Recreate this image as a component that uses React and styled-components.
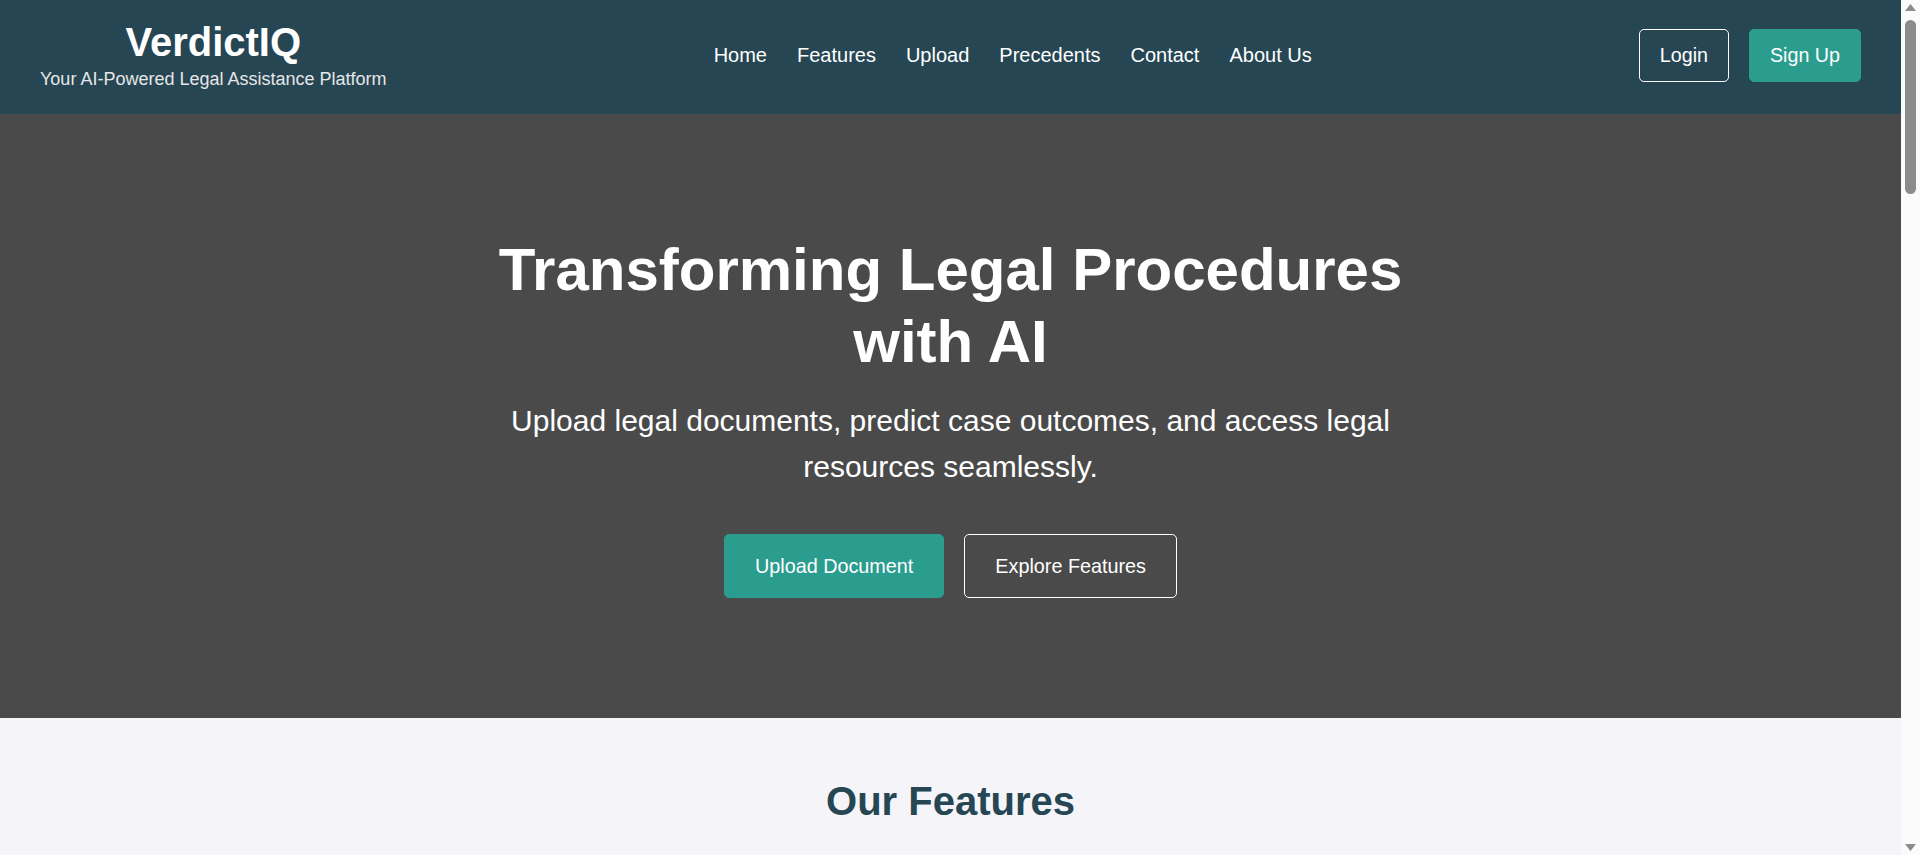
import styled, { createGlobalStyle } from 'styled-components';
import { FileUp, Scale, BookOpen, Gavel, MessageSquare, ShieldCheck, UploadCloud } from 'lucide-react';

const GlobalStyle = createGlobalStyle`
  html, body {
    margin: 0;
    padding: 0;
  }
  body {
    margin-right: 19px;
    font-family: 'Liberation Sans', Arial, sans-serif;
    background: #f4f4f9;
    color: #333;
  }
  * {
    box-sizing: border-box;
  }
`;

const features = [
  { icon: FileUp, title: 'Document Upload', text: 'Upload contracts, petitions and case files in PDF or Word format and let our AI extract the key facts, parties and clauses in seconds.' },
  { icon: Scale, title: 'Outcome Prediction', text: 'Get a data-driven estimate of how your case is likely to be decided, based on thousands of past judgments with similar facts.' },
  { icon: BookOpen, title: 'Precedent Search', text: 'Find relevant precedents instantly. Search by keyword, statute or court and read concise summaries of each decision.' },
  { icon: Gavel, title: 'Legal Procedures', text: 'Step-by-step guidance through filing, hearings and appeals, so you always know what comes next in your matter.' },
  { icon: MessageSquare, title: 'AI Legal Assistant', text: 'Ask questions in plain language and receive clear answers with references to the laws and cases that apply.' },
  { icon: ShieldCheck, title: 'Secure & Private', text: 'Your documents are encrypted end to end and never shared. You stay in full control of your data at all times.' },
];

const precedents = [
  { court: 'Supreme Court', year: '2021', title: 'State v. Harrington', text: 'Clarified the standard of proof required for admitting digital evidence in criminal proceedings.' },
  { court: 'High Court', year: '2019', title: 'Mehta Holdings v. Union Bank', text: 'Established limits on the enforcement of penalty clauses in commercial loan agreements.' },
  { court: 'Court of Appeal', year: '2022', title: 'Rivera v. Coastal Housing', text: 'Confirmed tenant protections against eviction without proper written notice and hearing.' },
];

// the browser scrollbar seen on the right edge of the page
function ScrollRail() {
  return (
    <S.Rail>
      <S.Arrow viewBox="0 0 19 17">
        <polygon points="4,11 15,11 9.5,4" />
      </S.Arrow>
      <S.Thumb />
      <S.Arrow viewBox="0 0 19 17" $bottom>
        <polygon points="4,6 15,6 9.5,13" />
      </S.Arrow>
    </S.Rail>
  );
}

function App() {
  return (
    <>
      <GlobalStyle />
      <S.Header>
        <S.Brand>
          <S.Logo>VerdictIQ</S.Logo>
          <S.Tagline>Your AI-Powered Legal Assistance Platform</S.Tagline>
        </S.Brand>
        <S.Nav>
          {['Home', 'Features', 'Upload', 'Precedents', 'Contact', 'About Us'].map((item) => (
            <S.NavLink key={item} href="#">
              {item}
            </S.NavLink>
          ))}
        </S.Nav>
        <S.Actions>
          <S.HeaderButton $variant="outline">Login</S.HeaderButton>
          <S.HeaderButton $variant="solid">Sign Up</S.HeaderButton>
        </S.Actions>
      </S.Header>

      <S.Hero>
        <S.HeroInner>
          <S.HeroTitle>Transforming Legal Procedures with AI</S.HeroTitle>
          <S.HeroText>
            Upload legal documents, predict case outcomes, and access legal resources seamlessly.
          </S.HeroText>
          <S.HeroActions>
            <S.HeroButton $variant="solid">Upload Document</S.HeroButton>
            <S.HeroButton $variant="outline">Explore Features</S.HeroButton>
          </S.HeroActions>
        </S.HeroInner>
      </S.Hero>

      <S.Section $bg="#f4f4f9">
        <S.SectionTitle>Our Features</S.SectionTitle>
        <S.CardGrid>
          {features.map(({ icon: Icon, title, text }) => (
            <S.Card key={title}>
              <S.CardIcon>
                <Icon size={34} strokeWidth={1.8} />
              </S.CardIcon>
              <S.CardTitle>{title}</S.CardTitle>
              <S.CardText>{text}</S.CardText>
            </S.Card>
          ))}
        </S.CardGrid>
      </S.Section>

      <S.Section $bg="#ffffff">
        <S.SectionTitle>Upload Your Document</S.SectionTitle>
        <S.Dropzone>
          <UploadCloud size={56} strokeWidth={1.5} color="#2a9d8f" />
          <S.DropText>Drag and drop your file here, or click to browse</S.DropText>
          <S.DropHint>Supported formats: PDF, DOCX, TXT (max 20 MB)</S.DropHint>
          <S.HeroButton $variant="solid">Choose File</S.HeroButton>
        </S.Dropzone>
      </S.Section>

      <S.Section $bg="#f4f4f9">
        <S.SectionTitle>Recent Precedents</S.SectionTitle>
        <S.CardGrid>
          {precedents.map((p) => (
            <S.Card key={p.title}>
              <S.Meta>
                {p.court} · {p.year}
              </S.Meta>
              <S.CardTitle>{p.title}</S.CardTitle>
              <S.CardText>{p.text}</S.CardText>
            </S.Card>
          ))}
        </S.CardGrid>
      </S.Section>

      <S.Section $bg="#ffffff">
        <S.SectionTitle>Contact Us</S.SectionTitle>
        <S.Form>
          <S.Input placeholder="Your Name" />
          <S.Input placeholder="Your Email" />
          <S.TextArea placeholder="Your Message" rows={6} />
          <S.HeroButton $variant="solid">Send Message</S.HeroButton>
        </S.Form>
      </S.Section>

      <S.Section $bg="#f4f4f9">
        <S.SectionTitle>About Us</S.SectionTitle>
        <S.About>
          VerdictIQ brings artificial intelligence to everyday legal work. Our team of lawyers and
          engineers builds tools that make legal procedures faster, clearer and more accessible for
          individuals, students and practitioners alike.
        </S.About>
        <S.About>
          From document analysis to outcome prediction, every feature is designed to save time and
          help you make better informed decisions.
        </S.About>
      </S.Section>

      <S.Footer>
        <S.FooterBrand>VerdictIQ</S.FooterBrand>
        <S.FooterText>© 2024 VerdictIQ. All rights reserved.</S.FooterText>
      </S.Footer>

      <ScrollRail />
    </>
  );
}

export default App;

const S = {
  Header: styled.header`
    display: flex;
    justify-content: space-between;
    align-items: center;
    padding: 20px 40px 24px;
    background-color: #264653;
    color: #fff;
  `,
  Brand: styled.div`
    text-align: center;
  `,
  Logo: styled.h1`
    margin: 0;
    font-size: 40px;
    line-height: 44px;
    font-weight: 700;
  `,
  Tagline: styled.p`
    margin: 5px 0 0;
    font-size: 18px;
    line-height: 21px;
    color: #e6e6e6;
  `,
  Nav: styled.nav`
    display: flex;
    gap: 30px;
  `,
  NavLink: styled.a`
    color: #fff;
    text-decoration: none;
    font-size: 20px;
    line-height: 23px;
  `,
  Actions: styled.div`
    display: flex;
    gap: 20px;
  `,
  HeaderButton: styled.button`
    padding: 15px 20px;
    font-family: inherit;
    font-size: 19.7px;
    line-height: 21px;
    color: #fff;
    border-radius: 5px;
    cursor: pointer;
    background-color: ${(props) => (props.$variant === 'solid' ? '#2a9d8f' : 'transparent')};
    border: 1px solid ${(props) => (props.$variant === 'solid' ? '#2a9d8f' : '#fff')};
  `,
  Hero: styled.section`
    padding: 120px 20px;
    background-color: #4a4a4a;
    color: #fff;
    text-align: center;
  `,
  HeroInner: styled.div`
    max-width: 920px;
    margin: 0 auto;
  `,
  HeroTitle: styled.h2`
    margin: 0;
    font-size: 60px;
    line-height: 72px;
    font-weight: 700;
  `,
  HeroText: styled.p`
    margin: 20px 0 44px;
    font-size: 30px;
    line-height: 46px;
  `,
  HeroActions: styled.div`
    display: flex;
    justify-content: center;
    gap: 20px;
  `,
  HeroButton: styled.button`
    padding: 20px 30px;
    font-family: inherit;
    font-size: 19.8px;
    line-height: 22px;
    color: #fff;
    border-radius: 5px;
    cursor: pointer;
    background-color: ${(props) => (props.$variant === 'solid' ? '#2a9d8f' : 'transparent')};
    border: 1px solid ${(props) => (props.$variant === 'solid' ? '#2a9d8f' : '#fff')};
  `,
  Section: styled.section`
    padding: 60px 40px;
    background-color: ${(props) => props.$bg};
    text-align: center;
  `,
  SectionTitle: styled.h2`
    margin: 0 0 40px;
    font-size: 40px;
    line-height: 46px;
    font-weight: 700;
    color: #264653;
  `,
  CardGrid: styled.div`
    display: grid;
    grid-template-columns: repeat(3, 1fr);
    gap: 30px;
    max-width: 1400px;
    margin: 0 auto;
  `,
  Card: styled.div`
    padding: 36px 30px;
    background-color: #fff;
    border-radius: 10px;
    box-shadow: 0 4px 12px rgba(0, 0, 0, 0.08);
    text-align: left;
  `,
  CardIcon: styled.div`
    display: flex;
    align-items: center;
    justify-content: center;
    width: 64px;
    height: 64px;
    margin-bottom: 20px;
    border-radius: 50%;
    background-color: rgba(42, 157, 143, 0.12);
    color: #2a9d8f;
  `,
  CardTitle: styled.h3`
    margin: 0 0 12px;
    font-size: 25px;
    color: #264653;
  `,
  CardText: styled.p`
    margin: 0;
    font-size: 18px;
    line-height: 1.6;
    color: #555;
  `,
  Meta: styled.div`
    margin-bottom: 10px;
    font-size: 16px;
    color: #2a9d8f;
    text-transform: uppercase;
    letter-spacing: 1px;
  `,
  Dropzone: styled.div`
    display: flex;
    flex-direction: column;
    align-items: center;
    gap: 18px;
    max-width: 900px;
    margin: 0 auto;
    padding: 60px 30px;
    border: 2px dashed #2a9d8f;
    border-radius: 12px;
    background-color: #f9fbfb;
  `,
  DropText: styled.p`
    margin: 0;
    font-size: 22px;
    color: #264653;
  `,
  DropHint: styled.p`
    margin: 0 0 10px;
    font-size: 17px;
    color: #777;
  `,
  Form: styled.form`
    display: flex;
    flex-direction: column;
    align-items: stretch;
    gap: 20px;
    max-width: 700px;
    margin: 0 auto;
  `,
  Input: styled.input`
    padding: 16px 18px;
    font-family: inherit;
    font-size: 18px;
    border: 1px solid #ccc;
    border-radius: 5px;
  `,
  TextArea: styled.textarea`
    padding: 16px 18px;
    font-family: inherit;
    font-size: 18px;
    border: 1px solid #ccc;
    border-radius: 5px;
    resize: vertical;
  `,
  About: styled.p`
    max-width: 900px;
    margin: 0 auto 20px;
    font-size: 20px;
    line-height: 1.7;
    color: #444;
  `,
  Footer: styled.footer`
    padding: 50px 40px;
    background-color: #264653;
    color: #fff;
    text-align: center;
  `,
  FooterBrand: styled.div`
    font-size: 30px;
    font-weight: 700;
    margin-bottom: 10px;
  `,
  FooterText: styled.div`
    font-size: 17px;
    color: #ccc;
  `,
  Rail: styled.div`
    position: fixed;
    top: 0;
    right: 0;
    display: flex;
    flex-direction: column;
    width: 19px;
    height: 100vh;
    background-color: #fbfbfb;
  `,
  Arrow: styled.svg`
    display: block;
    flex: none;
    width: 19px;
    height: 17px;
    margin-top: ${(props) => (props.$bottom ? 'auto' : '0')};
    fill: #8b8b8b;
  `,
  Thumb: styled.div`
    flex: none;
    width: 11px;
    height: 174px;
    margin: 3px 0 0 4px;
    border-radius: 6px;
    background-color: #8b8b8b;
  `,
};
